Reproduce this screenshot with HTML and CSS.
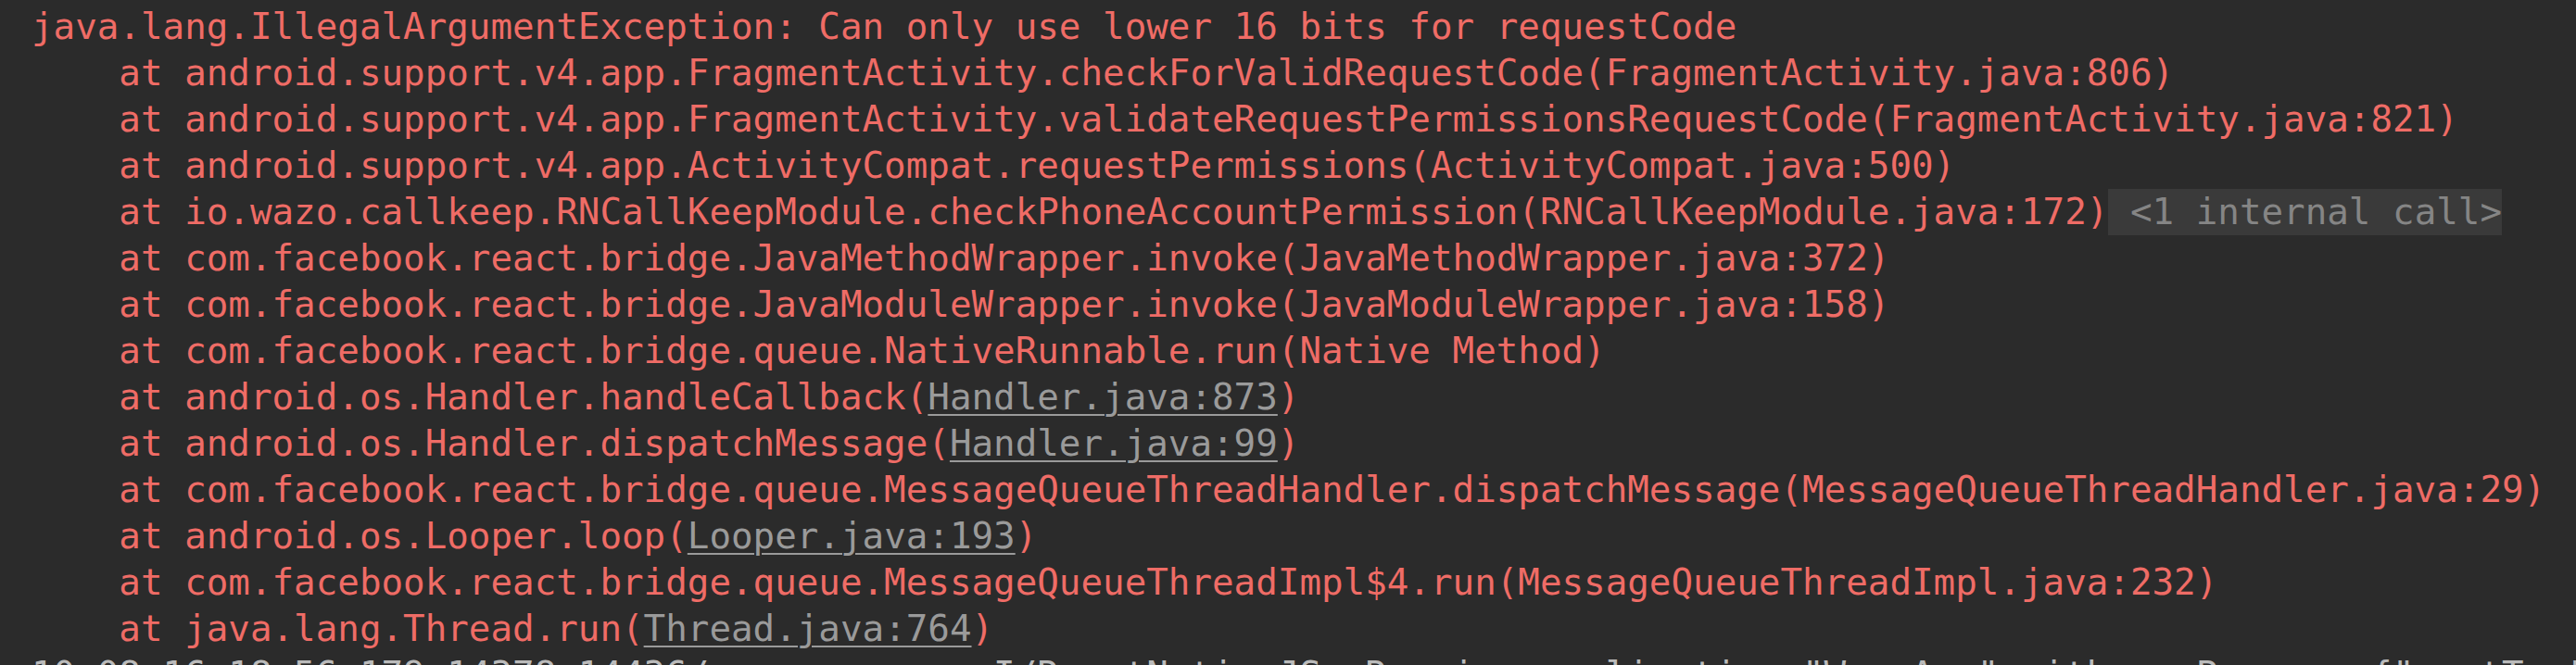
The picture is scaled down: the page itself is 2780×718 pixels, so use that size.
FILE: index.html
```html
<!DOCTYPE html>
<html>
<head>
<meta charset="utf-8">
<link rel="stylesheet" href="styles.css">
</head>
<body>
<div class="console">
<div class="line err">java.lang.IllegalArgumentException: Can only use lower 16 bits for requestCode</div>
<div class="line err">    at android.support.v4.app.FragmentActivity.checkForValidRequestCode(FragmentActivity.java:806)</div>
<div class="line err">    at android.support.v4.app.FragmentActivity.validateRequestPermissionsRequestCode(FragmentActivity.java:821)</div>
<div class="line err">    at android.support.v4.app.ActivityCompat.requestPermissions(ActivityCompat.java:500)</div>
<div class="line err">    at io.wazo.callkeep.RNCallKeepModule.checkPhoneAccountPermission(RNCallKeepModule.java:172)<span class="fold"> &lt;1 internal call&gt;</span></div>
<div class="line err">    at com.facebook.react.bridge.JavaMethodWrapper.invoke(JavaMethodWrapper.java:372)</div>
<div class="line err">    at com.facebook.react.bridge.JavaModuleWrapper.invoke(JavaModuleWrapper.java:158)</div>
<div class="line err">    at com.facebook.react.bridge.queue.NativeRunnable.run(Native Method)</div>
<div class="line err">    at android.os.Handler.handleCallback(<span class="link">Handler.java:873</span>)</div>
<div class="line err">    at android.os.Handler.dispatchMessage(<span class="link">Handler.java:99</span>)</div>
<div class="line err">    at com.facebook.react.bridge.queue.MessageQueueThreadHandler.dispatchMessage(MessageQueueThreadHandler.java:29)</div>
<div class="line err">    at android.os.Looper.loop(<span class="link">Looper.java:193</span>)</div>
<div class="line err">    at com.facebook.react.bridge.queue.MessageQueueThreadImpl$4.run(MessageQueueThreadImpl.java:232)</div>
<div class="line err">    at java.lang.Thread.run(<span class="link">Thread.java:764</span>)</div>
<div class="line info">10-08 16:18:56.179 14378-14436/com.wazo.app I/ReactNativeJS: Running application "WazoApp" with appParams: {"rootTag":1}</div>
</div>
</body>
</html>
```

FILE: styles.css
```css
html, body {
  margin: 0;
  padding: 0;
  background: #2b2b2b;
  width: 2780px;
  height: 718px;
  overflow: hidden;
}

.console {
  padding: 4px 0 0 34px;
  font-family: "DejaVu Sans Mono", "Liberation Mono", monospace;
  font-size: 39.2px;
  line-height: 50px;
}

.line {
  white-space: pre;
  height: 50px;
}

.err {
  color: #ef6c66;
}

.info {
  color: #bbbbbb;
}

.link {
  color: #9a9a9a;
  text-decoration: underline;
  text-decoration-thickness: 2px;
  text-underline-offset: 5px;
  text-decoration-color: #9a9a9a;
}

.fold {
  color: #858585;
  background: #3a3a3a;
  display: inline-block;
  height: 50px;
  vertical-align: top;
}
```
